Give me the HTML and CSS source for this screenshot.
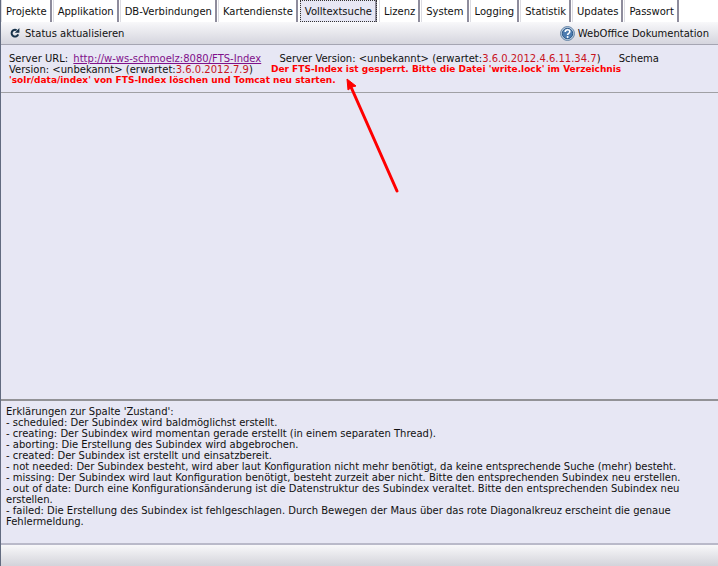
FILE: index.html
```
<!DOCTYPE html>
<html lang="de">
<head>
    <meta charset="UTF-8">
    <meta name="viewport" content="width=device-width, initial-scale=1.0">
    <title>WebOffice - Volltextsuche</title>
    <link rel="stylesheet" href="styles.css">
</head>
<body>
    <nav class="tabs">
        <a href="#">Projekte</a>
        <a href="#">Applikation</a>
        <a href="#">DB-Verbindungen</a>
        <a href="#">Kartendienste</a>
        <a href="#" class="active">Volltextsuche</a>
        <a href="#">Lizenz</a>
        <a href="#">System</a>
        <a href="#">Logging</a>
        <a href="#">Statistik</a>
        <a href="#">Updates</a>
        <a href="#">Passwort</a>
    </nav>

    <div class="toolbar">
        <button type="button" class="refresh">
            <svg width="10" height="12" viewBox="0 0 10 12">
                <path d="M6.6 3.2A3.4 3.4 0 1 0 8.2 7.4" fill="none" stroke="#17324a" stroke-width="2"/>
                <path d="M9.4 1V5.8H4.8Z" fill="#17324a"/>
            </svg>
            Status aktualisieren
        </button>
        <a href="#" class="docs">
            <svg width="15" height="15" viewBox="0 0 15 15">
                <circle cx="7.5" cy="7.5" r="6.9" fill="#dce8f4" stroke="#56799f"/>
                <circle cx="7.5" cy="7.5" r="5.3" fill="#4d7cb0" stroke="#285484"/>
                <path d="M5.2 6C5.2 3 10 3 9.8 5.8C9.7 7.4 7.7 7.3 7.6 9" fill="none" stroke="#fff" stroke-width="1.6"/>
                <circle cx="7.6" cy="11" r="1" fill="#fff"/>
            </svg>
            WebOffice Dokumentation
        </a>
    </div>

    <section class="status">
        <p>
            <span class="item">Server URL: <a href="#">http://w-ws-schmoelz:8080/FTS-Index</a></span>
            <span class="item">Server Version: &lt;unbekannt&gt; (erwartet:<span class="version">3.6.0.2012.4.6.11.34.7</span>)</span>
            <span class="item">Schema Version: &lt;unbekannt&gt; (erwartet:<span class="version">3.6.0.2012.7.9</span>)</span>
            <strong>Der FTS-Index ist gesperrt. Bitte die Datei 'write.lock' im Verzeichnis 'solr/data/index' von FTS-Index löschen und Tomcat neu starten.</strong>
        </p>
        <svg class="arrow" width="56" height="118" viewBox="0 0 56 118">
            <path d="M6 10L52 114" stroke="#f00" stroke-width="3" stroke-linecap="round"/>
            <path d="M2 2L11 9L7 10L3 13Z" fill="#f00" stroke="#f00"/>
        </svg>
    </section>

    <main class="content"></main>

    <section class="legend">
        <p>Erklärungen zur Spalte 'Zustand':</p>
        <p>- scheduled: Der Subindex wird baldmöglichst erstellt.</p>
        <p>- creating: Der Subindex wird momentan gerade erstellt (in einem separaten Thread).</p>
        <p>- aborting: Die Erstellung des Subindex wird abgebrochen.</p>
        <p>- created: Der Subindex ist erstellt und einsatzbereit.</p>
        <p>- not needed: Der Subindex besteht, wird aber laut Konfiguration nicht mehr benötigt, da keine entsprechende Suche (mehr) besteht.</p>
        <p>- missing: Der Subindex wird laut Konfiguration benötigt, besteht zurzeit aber nicht. Bitte den entsprechenden Subindex neu erstellen.</p>
        <p>- out of date: Durch eine Konfigurationsänderung ist die Datenstruktur des Subindex veraltet. Bitte den entsprechenden Subindex neu erstellen.</p>
        <p>- failed: Die Erstellung des Subindex ist fehlgeschlagen. Durch Bewegen der Maus über das rote Diagonalkreuz erscheint die genaue Fehlermeldung.</p>
    </section>

    <footer class="footer"></footer>
</body>
</html>
```
FILE: styles.css
```
* {
    margin: 0;
    padding: 0;
    box-sizing: border-box;
}
body {
    display: flex;
    flex-direction: column;
    min-height: 100vh;
    border-left: 1px solid #626b80;
    background-color: #e7e7f4;
    color: #111;
    font-family: "DejaVu Sans", Verdana, sans-serif;
    font-size: 10px;
    line-height: 11px;
}
.tabs {
    display: flex;
    gap: 1px;
    height: 22px;
    background-color: #fff;
}
.tabs a {
    padding: 6px 3px 0 4px;
    border-left: 1px solid #dcdce2;
    border-right: 2px solid #8e8c9c;
    color: #111;
    text-decoration: none;
    white-space: nowrap;
}
.tabs a.active {
    margin: 0 1px;
    background-color: #e7e7f4;
    outline: 1px dotted #333;
    outline-offset: -1px;
}
.toolbar {
    display: flex;
    justify-content: space-between;
    align-items: center;
    height: 23px;
    padding: 0 9px;
    border-bottom: 1px solid #a5a5b2;
    background: linear-gradient(#f8f8fa, #d5d5de);
}
.refresh {
    display: flex;
    align-items: center;
    gap: 5px;
    border: none;
    background: none;
    color: #111;
    font: inherit;
    cursor: pointer;
}
.docs {
    display: flex;
    align-items: center;
    gap: 3px;
    color: #111;
    text-decoration: none;
}
.status {
    position: relative;
    padding: 8px 24px 6px 8px;
    border-bottom: 1px solid #a0a0a4;
}
.status a {
    margin-left: 2px;
    color: #80108a;
}
.item {
    margin-right: 15px;
}
.version {
    color: #c8141e;
}
.status strong {
    color: #f00;
    font-size: 9px;
    vertical-align: top;
}
.arrow {
    position: absolute;
    left: 344px;
    top: 32px;
}
.content {
    flex: 1;
}
.legend {
    padding: 5px 5px 16px;
    border-top: 2px solid #929296;
    border-bottom: 2px solid #b9b9c9;
}
.footer {
    height: 21px;
    background: linear-gradient(#f8f8fa, #d3d3da);
}
```
